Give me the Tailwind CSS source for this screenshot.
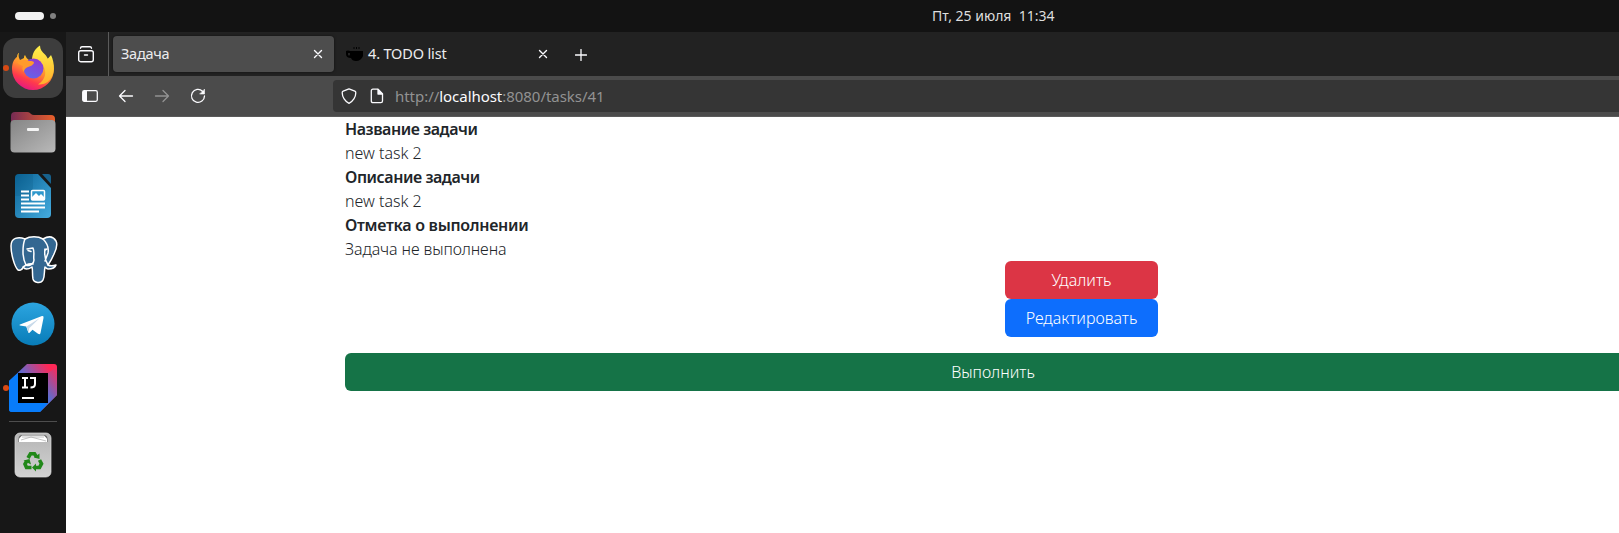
<!DOCTYPE html>
<html lang="ru">
<head>
<meta charset="utf-8">
<title>Задача</title>
<script src="https://cdn.jsdelivr.net/npm/@tailwindcss/browser@4"></script>
</head>
<body class="flex h-[533px] w-[1619px] flex-col overflow-hidden bg-white font-['Noto_Sans','Open_Sans',sans-serif]">
<header class="flex h-8 shrink-0 items-center bg-[#131313] text-[#f2f2f2]">
  <div class="flex w-[932px] items-center gap-[6px] pl-[15px]">
    <span class="h-2 w-[29px] rounded-full bg-[#f2f2f2]"></span>
    <span class="size-[6px] rounded-full bg-[#808080]"></span>
  </div>
  <span class="whitespace-pre text-[14px] leading-8 text-[#dedede]">Пт, 25 июля  11:34</span>
</header>
<div class="flex min-h-0 flex-1">
  <aside class="flex w-[66px] shrink-0 flex-col items-center bg-[#171717]">
    <div class="relative flex h-[68px] w-full items-center justify-center">
      <span class="absolute left-[3px] top-[33px] size-[6px] rounded-full bg-[#d84a14]"></span>
      <div class="mt-[4px] flex size-[60px] items-center justify-center rounded-[13px] bg-[#3d3d3d]">
        <svg class="size-[46px]" viewBox="0 0 46 46">
          <defs>
            <linearGradient id="ff" x1=".8" y1="0" x2=".3" y2="1"><stop offset="0" stop-color="#fff44f"/><stop offset=".25" stop-color="#ffc229"/><stop offset=".5" stop-color="#ff8a30"/><stop offset=".75" stop-color="#ff3a4c"/><stop offset="1" stop-color="#e31587"/></linearGradient>
            <linearGradient id="fp" x1=".7" y1="0" x2=".3" y2="1"><stop offset="0" stop-color="#9238d0"/><stop offset="1" stop-color="#6464e8"/></linearGradient>
            <linearGradient id="fy" x1=".5" y1="0" x2=".5" y2="1"><stop offset="0" stop-color="#fff14a"/><stop offset="1" stop-color="#ffae2c"/></linearGradient>
          </defs>
          <path d="M9 8c-1 3 0 5 1 7l4-2c0-1 0-2 1-3 1 2 2 4 4 5 8 2 18 2 22-5 2 4 3 9 3 14a21 21 0 0 1-42 0c0-6 2-10 5-12 0-2 1-4 2-4z" fill="url(#ff)"/>
          <path d="M30 .5c0 4 2 6 5 9 1 1 3 4 3 5 1-1 1-2 1-3 6 7 6 17 1 23-3 4-7 5-12 5 8-5 9-13 5-19-3-4-7-4-11-5 0-7 3-12 8-15z" fill="url(#fy)"/>
          <circle cx="23.500" cy="23.500" r="10" fill="url(#fp)"/>
          <path d="M7 17c4-2 8-3 12-1 2 0 5 0 5 2-1 2-3 3-6 4-2 1-4 2-4 5-2-2-2-4-1-6-2-1-5-2-6-4z" fill="#ff9a2c"/>
        </svg>
      </div>
    </div>
    <div class="flex h-[64px] items-center">
      <svg class="h-[42px] w-[46px]" viewBox="0 0 46 42">
        <defs><linearGradient id="fo"><stop offset="0" stop-color="#762b54"/><stop offset="1" stop-color="#e9602a"/></linearGradient><linearGradient id="fg" x1="0" y1="0" x2="1" y2="1"><stop offset="0" stop-color="#858585"/><stop offset="1" stop-color="#b9b9b9"/></linearGradient></defs>
        <path d="M1 20V5q0-4 4-4h12q2 0 3 1l1 1q1 1 3 1h17q4 0 4 4v12z" fill="url(#fo)"/>
        <rect x=".5" y="9" width="45" height="32.500" rx="4" fill="url(#fg)"/>
        <rect x="17" y="17" width="12" height="3" rx="1" fill="#f5f5f5"/>
      </svg>
    </div>
    <div class="flex h-[64px] items-center">
      <svg class="h-[46px] w-[38px]" viewBox="0 0 38 46">
        <defs><linearGradient id="wr" x1="0" y1="0" x2="1" y2="1"><stop offset="0" stop-color="#0a6396"/><stop offset="1" stop-color="#45acdf"/></linearGradient></defs>
        <path d="M1 5q0-4 4-4h19l13 14v26q0 4-4 4H5q-4 0-4-4z" fill="url(#wr)"/>
        <path d="M1 5q0-4 4-4h14v22H1z" fill="#08547f" opacity=".2"/>
        <path d="M28 1h6q3 0 3 3v7z" fill="#17618c"/>
        <path d="M7 18.500h8M7 22.500h8M7 26.500h8M7 30.500h24M7 34.500h24M7 38.500h18" stroke="#fff" stroke-width="2"/>
        <rect x="17.500" y="17.500" width="13" height="9.500" rx="1" fill="#2f98cc" stroke="#fff" stroke-width="1.500"/>
        <path d="M18 27v-3l4-4 3 3 2-2 4 4v2z" fill="#fff"/>
      </svg>
    </div>
    <div class="flex h-[64px] items-center">
      <svg class="ml-px h-[50px] w-[48px]" viewBox="0 0 48 50" fill="#336791" stroke="#fff" stroke-width="1.500" stroke-linecap="round" stroke-linejoin="round">
        <path d="M12 34c-1 1-2 2-4 1C4 31 1 18 1 11 1 3 8 1 15 4c5-3 13-3 18 0 5-3 10-3 13 2 2 4 0 9-2 13-2 5-4 8-6 11 2 1 5 1 8 0-1 3-5 4-8 4-1 0-2-1-3-2-1 4 0 9-2 13-2 4-9 3-10-1-1-5 0-8-1-12-3 2-7 3-9 0"/>
        <path d="M15 4c-2 4-2 9-2 13 0 5 1 9 3 13 4 2 8-2 8-5-1-4 1-7-1-12l-6 1M33 4c4 4 6 9 5 14l-3 8M38 30c-3-5-4-9-3-16M16 30c-2 1-3 2-4 4M16 30c2-1 4-2 7-1" fill="none"/>
        <path d="M18 15.500l3 1M35 15l2-1" stroke-width="1.500"/>
      </svg>
    </div>
    <div class="flex h-[64px] items-center">
      <svg class="size-[44px]" viewBox="0 0 44 44">
        <defs><linearGradient id="tg" x2="0" y2="1"><stop offset="0" stop-color="#2ca5e0"/><stop offset="1" stop-color="#087cb8"/></linearGradient></defs>
        <circle cx="22" cy="22" r="21.500" fill="url(#tg)"/>
        <path d="M9 22.500 31 14q2-.5 1.500 2l-3 15q-.5 2-2.500.8l-5.500-4-3 3q-1 .8-1.300-.5l-2-5.800L9 23.500q-1.300-.5 0-1z" fill="#fff"/>
        <path d="m15.500 24.500 13-8.200-10.300 10-.7 4.500z" fill="#c8daea"/>
      </svg>
    </div>
    <div class="relative flex h-[64px] w-full items-center justify-center">
      <span class="absolute left-[3px] top-[29px] size-[6px] rounded-full bg-[#d84a14]"></span>
      <svg class="size-[48px]" viewBox="0 0 48 48">
        <defs><linearGradient id="ij" x1="0" y1=".65" x2=".85" y2=".1"><stop offset=".2" stop-color="#087cfa"/><stop offset=".5" stop-color="#6c67c8"/><stop offset="1" stop-color="#fe2857"/></linearGradient><linearGradient id="ik" x1="1" y1="0" x2=".5" y2="1"><stop offset="0" stop-color="#fe2857"/><stop offset=".8" stop-color="#4f72d8"/></linearGradient></defs>
        <path d="M18 0h27q3 0 3 3v28L31 48H3q-3 0-3-3V17z" fill="url(#ij)"/>
        <path d="M48 3v28L31 48l8-9V9z" fill="url(#ik)"/>
        <path d="M0 17l9-8v30h30l-8 9H3q-3 0-3-3z" fill="#087cfa"/>
        <rect x="9" y="9" width="30" height="30"/>
        <path d="M13 14h6M16 14v9M13 23.500h6M21 14h5v6q0 3.500-4.500 3.500" fill="none" stroke="#fff" stroke-width="2"/>
        <path d="M13 34h12" stroke="#fff" stroke-width="2"/>
      </svg>
    </div>
    <div class="mt-px h-px w-12 bg-[#4d4d4d]"></div>
    <svg class="mt-[10px] h-[46px] w-[38px]" viewBox="0 0 38 46">
      <defs><linearGradient id="tr" x2="0" y2="1"><stop offset="0" stop-color="#b5b5b5"/><stop offset="1" stop-color="#d2d2d2"/></linearGradient></defs>
      <rect x="1" y="1" width="36" height="44" rx="5" fill="url(#tr)" stroke="#dedede" stroke-width=".7"/>
      <path d="M4.500 10V7q0-4 4-4h21q4 0 4 4v3z" fill="#666"/>
      <path d="M5 10V6.500l3-3h22l3 3V10z" fill="#fff"/>
      <path d="M7 8l10-3 15 4M8 5h22" stroke="#aaa" stroke-width=".7" fill="none"/>
      <g fill="none" stroke="#218819" stroke-width="3.600">
        <path d="M14 26l2.500-4.200h4l2 3.200"/><path d="M25.500 28l2 3.700-2 3.800h-3.500"/><path d="M17.500 35.500h-5L11 32l1.700-3"/>
      </g>
      <path d="M25.500 21.500v5.500l-5.500-1.500zM22 31.500v8l-4-4zM9.500 28.500l6-1.500 1.500 5.500z" fill="#218819"/>
    </svg>
  </aside>
  <main class="flex min-w-0 flex-1 flex-col">
    <div class="flex h-11 shrink-0 items-center bg-[#222] text-[#fbfbfe]">
      <div class="flex h-full w-[43px] items-center border-r border-[#5b5b5b] pl-3">
        <svg class="h-[17px] w-4" viewBox="0 0 16 17" fill="none" stroke="currentColor" stroke-width="1.400" stroke-linecap="round"><path d="M2.500 2.200q.2-1.500 1.500-1.500h8q1.300 0 1.500 1.500M6.500 9h3"/><rect x=".7" y="4.700" width="14.600" height="11" rx="2"/></svg>
      </div>
      <div class="ml-1 flex h-9 w-[221px] items-center justify-between rounded bg-[#4d4d4d] pl-2 pr-[11px] shadow-[0_0_3px_#0008]">
        <span class="text-[14.500px] tracking-[-0.25px] text-[#ececee]">Задача</span>
        <svg class="size-[10px]" viewBox="0 0 10 10" stroke="currentColor" stroke-width="1.400" stroke-linecap="round"><path d="m1.500 1.500 7 7m0-7-7 7"/></svg>
      </div>
      <div class="flex h-9 w-[214px] items-center pl-3">
        <svg class="h-[14px] w-[17px]" viewBox="0 0 17 14"><path d="M4 4h13v5q-2 5-7 5-4 0-5-3-5 0-5-4V4q2-1 4 0z"/><path d="M2 6v2q1 1 2 0V6z" fill="#222"/><path d="M8 0v2M10.500 0v2M13 0v2" stroke="#000" stroke-width="1"/></svg>
        <span class="ml-[5px] flex-1 text-[14.500px] tracking-[-0.15px] text-[#ececee]">4. TODO list</span>
        <svg class="size-[10px]" viewBox="0 0 10 10" stroke="currentColor" stroke-width="1.400" stroke-linecap="round"><path d="m1.500 1.500 7 7m0-7-7 7"/></svg>
      </div>
      <svg class="ml-[27px] mt-[2px] size-3" viewBox="0 0 12 12" stroke="currentColor" stroke-width="1.300" stroke-linecap="round"><path d="M6 .5v11M.5 6h11"/></svg>
    </div>
    <div class="flex h-[41px] shrink-0 items-center border-b border-[#5a5a5a] bg-[#4b4b4b] pl-4 text-[#fbfbfe]">
      <svg class="size-4" viewBox="0 0 16 16"><rect x=".7" y="2.700" width="14.600" height="10.600" rx="1.500" fill="none" stroke="currentColor" stroke-width="1.300"/><path d="M1 3h4v10H1z" fill="currentColor"/></svg>
      <svg class="ml-5 size-4" viewBox="0 0 16 16" fill="none" stroke="currentColor" stroke-width="1.300" stroke-linecap="round" stroke-linejoin="round"><path d="M14.500 8h-13M7 2.500 1.500 8 7 13.500"/></svg>
      <svg class="ml-5 size-4 text-[#939393]" viewBox="0 0 16 16" fill="none" stroke="currentColor" stroke-width="1.300" stroke-linecap="round" stroke-linejoin="round"><path d="M1.500 8h13M9 2.500 14.500 8 9 13.500"/></svg>
      <svg class="ml-5 size-4" viewBox="0 0 16 16" fill="none" stroke="currentColor" stroke-width="1.300" stroke-linecap="round"><path d="M12.500 3.200A6.500 6.500 0 1 0 14.500 8"/><path d="M14.500 1.500v4.500H10z" fill="currentColor" stroke-width=".6"/></svg>
      <div class="ml-[127px] flex h-8 flex-1 items-center rounded-l bg-[#353535] pl-2">
        <svg class="size-4" viewBox="0 0 16 16" fill="none" stroke="currentColor" stroke-width="1.300" stroke-linejoin="round"><path d="M8 .8l5.800 2.400q1 .4 1 1.500C14.800 9 12 13.500 8 15.300 4 13.500 1.200 9 1.200 4.700q0-1.100 1-1.500z"/></svg>
        <svg class="ml-3 size-4" viewBox="0 0 16 16" fill="none" stroke="currentColor" stroke-width="1.300" stroke-linejoin="round"><path d="M4 1.200h5L13.500 6v7q0 1.700-1.700 1.700H4q-1.700 0-1.700-1.700V3Q2.300 1.200 4 1.200z"/><path d="M9 1.500V6h4.500z" fill="currentColor"/></svg>
        <span class="ml-[10px] text-[15px] tracking-[-0.04px] text-[#929292]">http://<span class="text-[#fbfbfe]">localhost</span>:8080/tasks/41</span>
      </div>
    </div>
    <section class="ml-[279px] flex w-[1296px] flex-col text-[16px] leading-6 text-[#212529]">
      <dl class="[&_dt]:font-semibold [&_dd]:font-light">
        <dt class="tracking-[-0.45px]">Название задачи</dt><dd>new task 2</dd>
        <dt class="tracking-[-0.45px]">Описание задачи</dt><dd>new task 2</dd>
        <dt class="tracking-[-0.28px]">Отметка о выполнении</dt><dd class="tracking-[-0.1px]">Задача не выполнена</dd>
      </dl>
      <div class="flex w-[153px] flex-col self-start ml-[660px] font-light text-white">
        <button class="h-[38px] rounded-md bg-[#dc3545]">Удалить</button>
        <button class="h-[38px] rounded-md bg-[#0d6efd]">Редактировать</button>
      </div>
      <button class="mt-4 h-[38px] rounded-md bg-[#157347] font-light text-white">Выполнить</button>
    </section>
  </main>
</div>
</body>
</html>
